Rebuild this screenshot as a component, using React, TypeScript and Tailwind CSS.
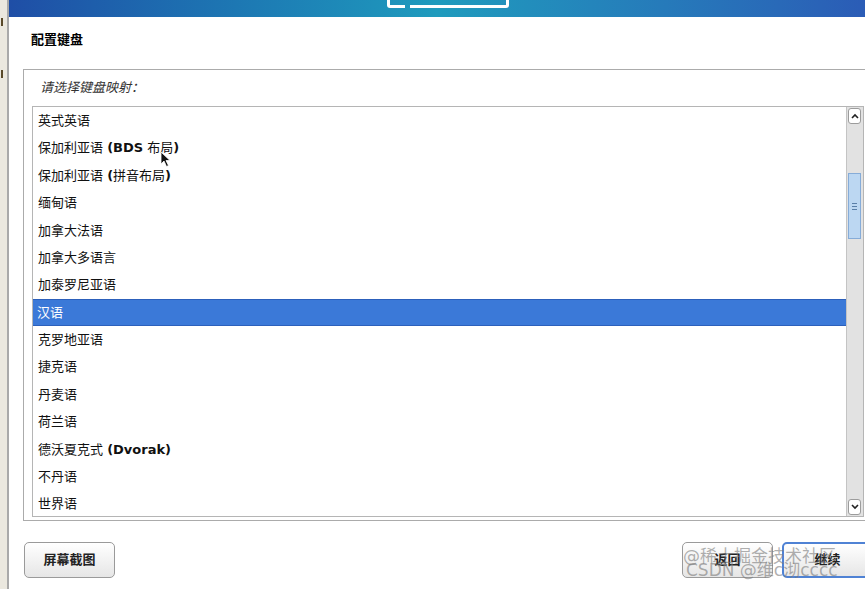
import { ReactNode } from "react";

const cjk = "font-['DejaVu_Sans','Noto_Sans_CJK_SC',sans-serif]";

type Row = { label: ReactNode; selected?: boolean };

const rows: Row[] = [
  { label: "英式英语" },
  { label: <>保加利亚语 <b className="font-bold">(BDS</b> 布局<b className="font-bold">)</b></> },
  { label: <>保加利亚语 <b className="font-bold">(</b>拼音布局<b className="font-bold">)</b></> },
  { label: "缅甸语" },
  { label: "加拿大法语" },
  { label: "加拿大多语言" },
  { label: "加泰罗尼亚语" },
  { label: "汉语", selected: true },
  { label: "克罗地亚语" },
  { label: "捷克语" },
  { label: "丹麦语" },
  { label: "荷兰语" },
  { label: <>德沃夏克式 <b className="font-bold">(Dvorak)</b></> },
  { label: "不丹语" },
  { label: "世界语" },
];

const Scrollbar = () => (
  <div className="w-[17px] shrink-0 flex flex-col bg-[#e2e2e2] border-l border-[#c4c4c4] py-[1px] pr-[1px]">
    <div className="h-[16px] mx-[1px] rounded-[3px] bg-white border border-[#9c9c9c] flex items-center justify-center">
      <svg width="8" height="6" viewBox="0 0 8 6">
        <path d="M1 5 L4 2 L7 5" stroke="#222" strokeWidth="1.6" fill="none" />
      </svg>
    </div>
    <div className="h-[49px]" />
    <div className="h-[66px] mx-[1px] bg-[#bcd7f2] border border-[#86acd8] flex flex-col items-center justify-center gap-[2px]">
      <div className="w-[5px] h-[1px] bg-[#5a7fa8]" />
      <div className="w-[5px] h-[1px] bg-[#5a7fa8]" />
      <div className="w-[5px] h-[1px] bg-[#5a7fa8]" />
    </div>
    <div className="flex-1" />
    <div className="h-[16px] mx-[1px] rounded-[3px] bg-white border border-[#9c9c9c] flex items-center justify-center">
      <svg width="8" height="6" viewBox="0 0 8 6">
        <path d="M1 1 L4 4 L7 1" stroke="#222" strokeWidth="1.6" fill="none" />
      </svg>
    </div>
  </div>
);

const Button = ({ children, primary }: { children: ReactNode; primary?: boolean }) => (
  <button
    className={
      primary
        ? "w-[91px] h-[36px] shrink-0 rounded-[5px] border-2 border-[#4f82d4] bg-gradient-to-b from-white to-[#e6e6e6] text-[13px] font-bold text-[#222]"
        : "w-[91px] h-[36px] shrink-0 rounded-[5px] border border-[#9a9a9a] bg-gradient-to-b from-white to-[#e6e6e6] text-[13px] font-bold text-[#222]"
    }
  >
    {children}
  </button>
);

export default function App() {
  return (
    <div className={`relative w-[865px] h-[589px] overflow-hidden bg-white flex ${cjk}`}>
      {/* desktop edge */}
      <div className="w-[9px] shrink-0 bg-[#ebe8df] border-r-2 border-[#a9a9a9] flex flex-col pt-[18px] gap-[44px] pl-[1px]">
        <div className="w-[2px] h-[8px] bg-[#5a4a2a]" />
        <div className="w-[2px] h-[8px] bg-[#5a4a2a]" />
      </div>

      <div className="flex-1 flex flex-col min-w-0">
        {/* header band */}
        <div className="h-[17px] shrink-0 bg-gradient-to-r from-[#1f4ea6] via-[#1f9bbd] to-[#2b5cb6] flex justify-center">
          <div className="ml-[22px] w-[122px] h-[8px] flex items-end border-x-[3px] border-white rounded-b-[3px]">
            <div className="w-[15px] h-[3px] bg-white" />
            <div className="w-[5px]" />
            <div className="flex-1 h-[3px] bg-white" />
          </div>
        </div>

        <div className="mt-[15px] h-[16px] flex">
          <div className="w-[22px] shrink-0" />
          <div className="leading-[16px] text-[13px] font-bold text-black">配置键盘</div>
        </div>

        {/* frame */}
        <div className="mt-[21px] ml-[14px] -mr-[4px] h-[452px] border border-[#ababab] flex flex-col pl-[8px] pr-[4px]">
          <div className="h-[36px] pl-[8px] flex items-center italic text-[13px] text-[#333]">请选择键盘映射：</div>
          <div className="h-[411px] border border-[#b5b5b5] flex overflow-hidden">
            <div className="flex-1 flex flex-col">
              {rows.map((r, i) => (
                <div
                  key={i}
                  className={
                    r.selected
                      ? "h-[27.4px] shrink-0 pl-[4px] flex items-center text-[13px] text-white bg-[#3b79d8] border-y border-[#2c60bb]"
                      : "h-[27.4px] shrink-0 pl-[5px] flex items-center text-[13px] text-[#111]"
                  }
                >
                  <span>{r.label}</span>
                </div>
              ))}
            </div>
            <Scrollbar />
          </div>
        </div>

        {/* buttons */}
        <div className="mt-[21px] pl-[15px] flex items-start">
          <Button>屏幕截图</Button>
          <div className="flex-1" />
          <Button>返回</Button>
          <div className="w-[9px]" />
          <div className="-mr-[8px]">
            <Button primary>继续</Button>
          </div>
        </div>
      </div>

      {/* mouse pointer */}
      <svg className="absolute left-[160px] top-[151px]" width="12" height="17" viewBox="0 0 12 17">
        <path d="M1 1 L1 13 L4 10 L6.5 15.5 L8.5 14.5 L6 9.5 L10 9.5 Z" fill="#111" stroke="#fff" strokeWidth="0.8" />
      </svg>

      {/* watermark */}
      <div className="absolute left-[683px] top-[546px] text-[17px] leading-[20px] text-[#7a7a7a]/60 whitespace-nowrap">@稀土掘金技术社区</div>
      <div className="absolute left-[686px] top-[560px] text-[17px] leading-[20px] text-[#7a7a7a]/60 whitespace-nowrap">CSDN @维c沏cccc</div>
    </div>
  );
}
